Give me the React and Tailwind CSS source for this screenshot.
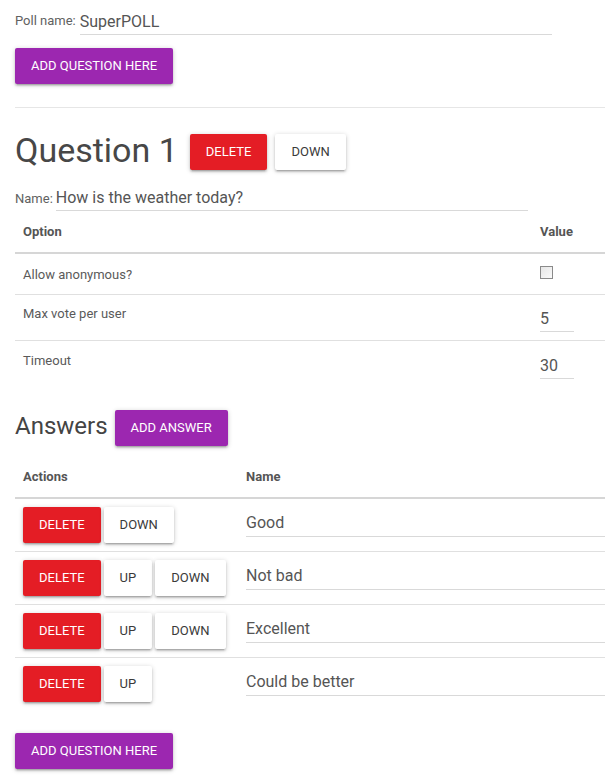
import React from "react";

const shadow = "shadow-[0_2px_2px_0_rgba(0,0,0,0.14),0_3px_1px_-2px_rgba(0,0,0,0.12),0_1px_5px_0_rgba(0,0,0,0.2)]";

function Btn({ kind, children }) {
  const color =
    kind === "red"
      ? "bg-[#e41d25] text-white"
      : kind === "purple"
      ? "bg-[#9c27b0] text-white"
      : "bg-white text-[#3a3a3a]";
  return (
    <button
      className={`h-[36px] px-4 rounded-[2px] text-[13px] uppercase leading-[36px] whitespace-nowrap ${color} ${shadow}`}
    >
      {children}
    </button>
  );
}

function UnderlineInput({ value, className = "", textClass = "text-[16px]" }) {
  return (
    <div className={`border-b border-[#d9d9d9] text-[#555] ${textClass} ${className}`}>
      {value}
    </div>
  );
}

const answers = [
  { name: "Good", up: false, down: true },
  { name: "Not bad", up: true, down: true },
  { name: "Excellent", up: true, down: true },
  { name: "Could be better", up: true, down: false },
];

export default function App() {
  return (
    <div
      className="min-h-[780px] bg-white pl-[15px] text-[#555]"
      style={{ fontFamily: "Roboto, 'Liberation Sans', sans-serif" }}
    >
      {/* Poll name */}
      <div className="flex items-end pt-[10px] w-[537px]">
        <span className="text-[13px] text-[#616161] leading-[16px] pb-[6px] pr-[4px]">Poll name:</span>
        <UnderlineInput value="SuperPOLL" className="flex-1 leading-[24px]" textClass="text-[16px]" />
      </div>

      <div className="mt-[13px]">
        <Btn kind="purple">Add question here</Btn>
      </div>

      <div className="mt-[23px] border-t border-[#e6e6e6]" />

      {/* Question heading */}
      <div className="flex items-center mt-[26px] gap-[8px]">
        <h3 className="text-[34px] leading-[36px] text-[#474747] font-normal pr-[4px] -mt-[5px]">Question 1</h3>
        <Btn kind="red">Delete</Btn>
        <Btn kind="white">Down</Btn>
      </div>

      {/* Name */}
      <div className="flex items-end mt-[15px] w-[513px]">
        <span className="text-[13px] text-[#616161] leading-[16px] pb-[4px] pr-[3px]">Name:</span>
        <UnderlineInput value="How is the weather today?" className="flex-1 leading-[24px] pt-[1px]" />
      </div>

      {/* Options table */}
      <div className="text-[13px] text-[#5a5a5a] mt-[1px]">
        <div className="flex h-[42px] items-center border-b-2 border-[#d6d6d6] font-bold text-[13px] text-[#555]">
          <div className="flex-1 px-2">Option</div>
          <div className="w-[73px] px-2">Value</div>
        </div>
        <div className="flex h-[41px] items-center border-b border-[#e0e0e0]">
          <div className="flex-1 px-2 pt-[1px]">Allow anonymous?</div>
          <div className="w-[73px] px-2 flex">
            <div className="w-[13px] h-[13px] -mt-[4px] border border-[#8a8a8a] bg-gradient-to-br from-[#e6e6e6] to-[#fafafa]" />
          </div>
        </div>
        <div className="flex h-[46px] items-start border-b border-[#e0e0e0]">
          <div className="flex-1 px-2 pt-[11px] leading-[16px]">Max vote per user</div>
          <div className="w-[73px] px-2 pt-[12px]">
            <UnderlineInput value="5" className="w-[34px] h-[25px] leading-[24px]" />
          </div>
        </div>
        <div className="flex h-[46px] items-start">
          <div className="flex-1 px-2 pt-[12px] leading-[16px]">Timeout</div>
          <div className="w-[73px] px-2 pt-[13px]">
            <UnderlineInput value="30" className="w-[34px] h-[25px] leading-[24px]" />
          </div>
        </div>
      </div>

      {/* Answers heading */}
      <div className="flex items-center mt-[23px] gap-[7px]">
        <h4 className="text-[24px] leading-[30px] text-[#444] font-normal -mt-[4px]">Answers</h4>
        <Btn kind="purple">Add answer</Btn>
      </div>

      {/* Answers table */}
      <div className="mt-[11px] text-[13px]">
        <div className="flex h-[42px] items-center border-b-2 border-[#d6d6d6] font-bold text-[13px] text-[#555]">
          <div className="w-[223px] px-2">Actions</div>
          <div className="flex-1 px-2">Name</div>
        </div>
        {answers.map((a, i) => (
          <div
            key={a.name}
            className={`flex h-[53px] items-center ${i < answers.length - 1 ? "border-b border-[#e0e0e0]" : ""}`}
          >
            <div className="w-[223px] px-2 flex gap-[3px] -mt-[1px]">
              <Btn kind="red">Delete</Btn>
              {a.up && <Btn kind="white">Up</Btn>}
              {a.down && <Btn kind="white">Down</Btn>}
            </div>
            <div className="flex-1 pl-2 -mt-[3px]">
              <UnderlineInput value={a.name} className="leading-[24px] pb-[1px]" />
            </div>
          </div>
        ))}
      </div>

      <div className="mt-[22px]">
        <Btn kind="purple">Add question here</Btn>
      </div>
    </div>
  );
}
